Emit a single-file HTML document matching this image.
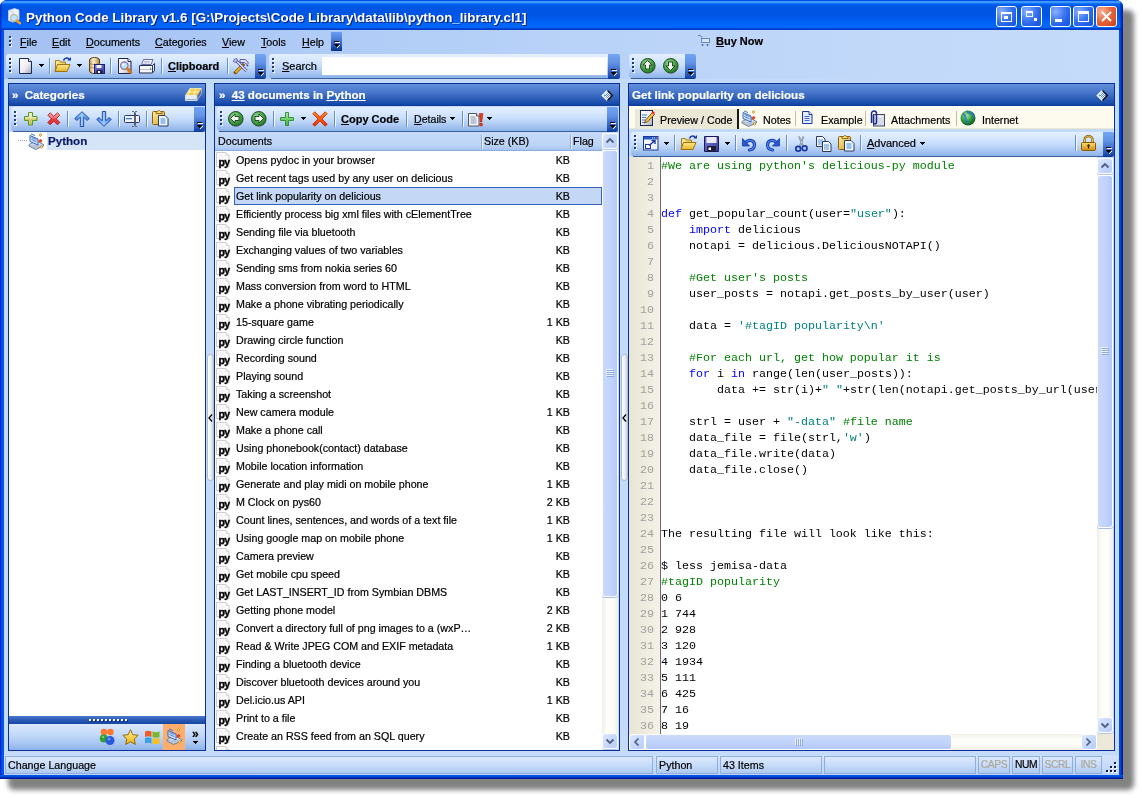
<!DOCTYPE html><html><head><meta charset="utf-8"><title>Python Code Library</title><style>
*{margin:0;padding:0;box-sizing:border-box}
html,body{width:1142px;height:798px;overflow:hidden;background:#fff;font-family:"Liberation Sans",sans-serif;font-size:10.7px;color:#000;-webkit-text-stroke:0.2px}
.a{position:absolute}
svg{position:absolute;overflow:visible}
#shadow{left:8px;top:10px;width:1126px;height:780px;background:rgba(0,0,0,0.49);filter:blur(2.5px);border-radius:6px}
#win{will-change:transform;left:0;top:0;width:1123px;height:779px;background:linear-gradient(90deg,#0019cf 0,#0030d8 1px,#0058ee 2px,#0054e8 4px);border-radius:7px 7px 0 0;overflow:hidden}
#wr{left:1119px;top:30px;width:4px;height:749px;background:linear-gradient(90deg,#0050e8,#0040d0 2px,#0020a8 3px,#00138c 4px)}
#wb{left:0;top:775px;width:1123px;height:4px;background:linear-gradient(180deg,#0058ee,#0044d4 2px,#0024a8 3px,#00138c 4px)}
#title{left:0;top:0;width:1123px;height:30px;background:linear-gradient(180deg,#0050e6 0,#0050e6 1px,#3d98ff 1px,#3d98ff 3px,#1a7aff 3px,#0a6af6 4px,#005ae8 5px,#0054e3 10px,#0056e6 16px,#005ef0 20px,#0064f8 23px,#0066ff 28px,#0044d2 28px,#003ec8 30px)}
#ttext{left:26px;top:10px;color:#fff;font-weight:bold;font-size:13.4px;text-shadow:1px 1px 0 #0a1e7a;white-space:nowrap;-webkit-text-stroke:0}
.tb{top:6px;width:21px;height:21px;border:1px solid #fff;border-radius:3px;background:radial-gradient(circle at 25% 25%,#8ab0ff,#3c77f2 45%,#2160e8 70%,#1a55dc)}
#client{left:4px;top:30px;width:1115px;height:745px;background:#c4daf9}
#strip{left:4px;top:30px;width:1115px;height:49px;background:linear-gradient(90deg,#a4c1f3,#b4cff7 40%,#c2d9f9 80%,#c4dbfa)}
.m{position:absolute;top:36px;white-space:nowrap}
.tbar{border-radius:3px 0 0 3px;background:linear-gradient(180deg,#e3efff 0,#dae9fe 20%,#cadffb 45%,#b0ccf4 72%,#8db3ea 100%)}
.chev{border-radius:0 2px 2px 0;background:linear-gradient(180deg,#73a5f3,#6293e5 35%,#3d6cc8 65%,#1d4cad 90%,#0a3a98)}
.sep{width:2px;border-left:1px solid #6a8ccb;border-right:1px solid #f1f9ff}
.gd{position:absolute;width:2px;height:2px;background:#1f3a78;box-shadow:1px 1px 0 #fff}
.panel{border:1px solid #0a2f9a;background:#c4daf9}
.phead{height:22px;background:linear-gradient(180deg,#6490dc 0,#4a79cc 35%,#2a5cb6 70%,#1448a6 92%,#0a3a98 100%)}
.ht{color:#fff;font-weight:bold;font-size:11.6px;white-space:nowrap;top:88px}
.row{position:absolute;height:18px;white-space:nowrap;line-height:18px;font-size:10.7px}
#status{left:4px;top:751px;width:1115px;height:24px;background:linear-gradient(180deg,#c6dbf9,#c6dbf9 4px,#d2e3fb 5px,#bcd3f6)}
.sp{top:756px;height:18px;border:1px solid #8eaedb;background:linear-gradient(180deg,#dbe9fd,#c8dcf9 50%,#aec9f2);line-height:16px;padding-left:2px;white-space:nowrap;font-size:10.7px}
.code{font-family:"Liberation Mono",monospace;font-size:11.67px;white-space:pre;line-height:16px;-webkit-text-stroke:0}
.ln{color:#a0a0a0;text-align:right;width:25px}
.u{text-decoration:underline;text-underline-offset:1px}
.cm{color:#008000}.kw{color:#0000ff}.st{color:#008080}
.bt{font-weight:bold;font-size:11px;white-space:nowrap}
.nw{white-space:nowrap}
</style></head><body>
<svg width="0" height="0" style="position:absolute"><defs>
<linearGradient id="gDoc" x1="0" y1="0" x2="1" y2="1"><stop offset="0" stop-color="#fff"/><stop offset=".55" stop-color="#eeeef3"/><stop offset="1" stop-color="#9fa3b5"/></linearGradient>
<linearGradient id="gFold" x1="0" y1="0" x2="0" y2="1"><stop offset="0" stop-color="#fbe98a"/><stop offset="1" stop-color="#e6b52a"/></linearGradient>
<linearGradient id="gFoldB" x1="0" y1="0" x2="1" y2="0"><stop offset="0" stop-color="#f8ec90"/><stop offset="1" stop-color="#e8c650"/></linearGradient>
<linearGradient id="gDb" x1="0" y1="0" x2="1" y2="0"><stop offset="0" stop-color="#c89a50"/><stop offset=".4" stop-color="#fbf0d0"/><stop offset="1" stop-color="#b08440"/></linearGradient>
<linearGradient id="gFlop" x1="0" y1="0" x2="1" y2="1"><stop offset="0" stop-color="#7a7ad8"/><stop offset="1" stop-color="#3a3a98"/></linearGradient>
<radialGradient id="gGreen" cx=".4" cy=".35" r=".7"><stop offset="0" stop-color="#9ee09e"/><stop offset=".6" stop-color="#3fa03f"/><stop offset="1" stop-color="#1c6a1c"/></radialGradient>
<linearGradient id="gPlusY" x1="0" y1="0" x2="0" y2="1"><stop offset="0" stop-color="#f4f2e0"/><stop offset=".45" stop-color="#e6e4b0"/><stop offset=".5" stop-color="#d4d070"/><stop offset="1" stop-color="#c8c460"/></linearGradient>
<linearGradient id="gRed" x1="0" y1="0" x2="0" y2="1"><stop offset="0" stop-color="#ffb0b0"/><stop offset=".45" stop-color="#f06868"/><stop offset=".5" stop-color="#e83c3c"/><stop offset="1" stop-color="#e03030"/></linearGradient>
<linearGradient id="gBlue" x1="0" y1="0" x2="1" y2="0"><stop offset="0" stop-color="#3a7ae0"/><stop offset=".45" stop-color="#9ad0ff"/><stop offset="1" stop-color="#3a80e8"/></linearGradient>
<linearGradient id="gOrX" x1="0" y1="0" x2="0" y2="1"><stop offset="0" stop-color="#ff9020"/><stop offset="1" stop-color="#f02800"/></linearGradient>
<linearGradient id="gPlusG" x1="0" y1="0" x2="0" y2="1"><stop offset="0" stop-color="#a8f0a0"/><stop offset="1" stop-color="#40b040"/></linearGradient>
<linearGradient id="gClip" x1="0" y1="0" x2="1" y2="1"><stop offset="0" stop-color="#fff0a0"/><stop offset="1" stop-color="#d89c28"/></linearGradient>
<linearGradient id="gLock" x1="0" y1="0" x2="0" y2="1"><stop offset="0" stop-color="#ffe070"/><stop offset="1" stop-color="#d08a10"/></linearGradient>
<radialGradient id="gGlobe" cx=".4" cy=".35" r=".7"><stop offset="0" stop-color="#a8e8a0"/><stop offset=".5" stop-color="#30a040"/><stop offset="1" stop-color="#105020"/></radialGradient>
<linearGradient id="gStar" x1="0" y1="0" x2="0" y2="1"><stop offset="0" stop-color="#fff4a0"/><stop offset="1" stop-color="#f0b000"/></linearGradient>
</defs></svg>
<div class="a" id="shadow"></div>
<div class="a" id="win">
<div class="a" id="title"></div>
<svg style="left:6px;top:8px" width="16" height="16" viewBox="0 0 16 16"><path d="M2.5 2.5l6-2 4.5 1.5v9.5l-6 2.5-4.5-1.5z" fill="#eef2fc" stroke="#c8d0e8" stroke-width="0.8"/><path d="M2.5 2.5l4.5 1.5v10.5" fill="none" stroke="#b8c4e0" stroke-width="0.8"/><circle cx="8" cy="10" r="3.4" fill="#b8eaff" stroke="#c0b8a8" stroke-width="1.3"/><path d="M10.5 12.5l3.5 2.8" stroke="#ff9a20" stroke-width="2.4" stroke-linecap="round"/></svg>
<div class="a" id="ttext">Python Code Library v1.6 [G:\Projects\Code Library\data\lib\python_library.cl1]</div>
<div class="a tb" style="left:996px"></div>
<div class="a tb" style="left:1021px"></div>
<div class="a tb" style="left:1050px"></div>
<div class="a tb" style="left:1073px"></div>
<div class="a tb" style="left:1096px;background:radial-gradient(circle at 25% 25%,#f5b49a,#e6693f 45%,#d9512a 75%,#c53e18)"></div>
<svg style="left:996px;top:6px" width="21" height="21" viewBox="0 0 21 21"><rect x="5.5" y="6.5" width="10" height="9" fill="none" stroke="#fff" stroke-width="1"/><rect x="5" y="6" width="11" height="2" fill="#fff"/><rect x="8" y="10" width="4" height="3" fill="#fff"/></svg>
<svg style="left:1021px;top:6px" width="21" height="21" viewBox="0 0 21 21"><rect x="5.5" y="5.5" width="6" height="5" fill="none" stroke="#fff"/><rect x="5" y="5" width="7" height="2" fill="#fff"/><rect x="13" y="12" width="3" height="3" fill="#fff"/></svg>
<svg style="left:1050px;top:6px" width="21" height="21" viewBox="0 0 21 21"><rect x="5" y="13" width="7" height="3" fill="#fff"/></svg>
<svg style="left:1073px;top:6px" width="21" height="21" viewBox="0 0 21 21"><rect x="5.5" y="5.5" width="10" height="10" fill="none" stroke="#fff"/><rect x="5" y="5" width="11" height="3" fill="#fff"/></svg>
<svg style="left:1096px;top:6px" width="21" height="21" viewBox="0 0 21 21"><path d="M6 6l9 9M15 6l-9 9" stroke="#fff" stroke-width="2"/></svg>
<div class="a" id="wr"></div><div class="a" id="wb"></div>
<div class="a" style="left:1120px;top:0;width:3px;height:30px;background:linear-gradient(90deg,rgba(0,40,200,.3),rgba(0,30,170,.8) 2px,#001a9a)"></div><div class="a" style="left:0;top:0;width:2px;height:30px;background:linear-gradient(90deg,#0028c0,rgba(0,60,220,.4))"></div>
<div class="a" id="client"></div><div class="a" id="strip"></div>
<div class="gd" style="left:9px;top:36px"></div>
<div class="gd" style="left:9px;top:40px"></div>
<div class="gd" style="left:9px;top:44px"></div>
<div class="m" style="left:20px"><span class="u">F</span>ile</div>
<div class="m" style="left:52px"><span class="u">E</span>dit</div>
<div class="m" style="left:86px"><span class="u">D</span>ocuments</div>
<div class="m" style="left:155px"><span class="u">C</span>ategories</div>
<div class="m" style="left:222px"><span class="u">V</span>iew</div>
<div class="m" style="left:261px"><span class="u">T</span>ools</div>
<div class="m" style="left:302px"><span class="u">H</span>elp</div>
<div class="a chev" style="left:331px;top:32px;height:19px;width:11px;border-radius:0;background:linear-gradient(180deg,#6a9ef0,#4a7cd8 40%,#1c4cac 80%,#0a3088)"></div>
<div class="a" style="left:334px;top:41px;width:5px;height:1px;background:#000"></div>
<div class="a" style="left:335px;top:42px;width:5px;height:1px;background:#fff"></div>
<div class="a" style="left:334px;top:44px;width:5px;height:1px;background:#000"></div>
<div class="a" style="left:335px;top:45px;width:3px;height:1px;background:#000"></div>
<div class="a" style="left:336px;top:46px;width:1px;height:1px;background:#000"></div>
<div class="a" style="left:339px;top:45px;width:1px;height:1px;background:#fff"></div>
<div class="a" style="left:338px;top:46px;width:1px;height:1px;background:#fff"></div>
<div class="a" style="left:337px;top:47px;width:1px;height:1px;background:#fff"></div>
<div class="a tbar" style="left:6px;top:54px;width:249px;height:24px"></div>
<div class="a" style="left:8px;top:78px;width:247px;height:1px;background:#3b619c"></div>
<div class="a chev" style="left:255px;top:54px;height:25px;width:11px;"></div>
<div class="a" style="left:258px;top:69px;width:5px;height:1px;background:#000"></div>
<div class="a" style="left:259px;top:70px;width:5px;height:1px;background:#fff"></div>
<div class="a" style="left:258px;top:72px;width:5px;height:1px;background:#000"></div>
<div class="a" style="left:259px;top:73px;width:3px;height:1px;background:#000"></div>
<div class="a" style="left:260px;top:74px;width:1px;height:1px;background:#000"></div>
<div class="a" style="left:263px;top:73px;width:1px;height:1px;background:#fff"></div>
<div class="a" style="left:262px;top:74px;width:1px;height:1px;background:#fff"></div>
<div class="a" style="left:261px;top:75px;width:1px;height:1px;background:#fff"></div>
<div class="gd" style="left:9px;top:58px"></div>
<div class="gd" style="left:9px;top:62px"></div>
<div class="gd" style="left:9px;top:66px"></div>
<div class="gd" style="left:9px;top:70px"></div>
<svg style="left:19px;top:58px" width="14" height="17" viewBox="0 0 14 17"><path d="M0.5 0.5h9l3 3v12h-12z" fill="url(#gDoc)" stroke="#1c2850"/><path d="M9.5 0.5v3h3" fill="#fff" stroke="#1c2850"/></svg>
<div class="a" style="left:39px;top:64px;width:5px;height:1px;background:#000"></div><div class="a" style="left:40px;top:65px;width:3px;height:1px;background:#000"></div><div class="a" style="left:41px;top:66px;width:1px;height:1px;background:#000"></div>
<div class="a sep" style="left:49px;top:58px;height:16px"></div>
<svg style="left:54px;top:57px" width="18" height="16" viewBox="0 0 18 16"><path d="M1.5 3.5h4l1 1.5h5v9.5h-10z" fill="url(#gFoldB)" stroke="#a08020"/><path d="M3.5 7.5h12.5l-3 7h-12z" fill="url(#gFold)" stroke="#a07010"/><path d="M9.5 3.5c1-3 4.5-3.5 6-0.5" fill="none" stroke="#1838a8" stroke-width="1.6"/><path d="M13.5 3.5h3.5v-3.5z" fill="#1838a8"/></svg>
<div class="a" style="left:77px;top:64px;width:5px;height:1px;background:#000"></div><div class="a" style="left:78px;top:65px;width:3px;height:1px;background:#000"></div><div class="a" style="left:79px;top:66px;width:1px;height:1px;background:#000"></div>
<svg style="left:88px;top:57px" width="17" height="17" viewBox="0 0 17 17"><path d="M1.5 3c0-1.6 2.4-2.5 5-2.5s5 .9 5 2.5v11c0 1.6-2.4 2.5-5 2.5s-5-.9-5-2.5z" fill="url(#gDb)" stroke="#5a4010"/><path d="M1.5 6.5c2 1.3 8 1.3 10 0M1.5 10c2 1.3 8 1.3 10 0" fill="none" stroke="#a07838" stroke-width="0.8"/><rect x="6.5" y="7.5" width="10" height="9" fill="url(#gFlop)" stroke="#202068"/><rect x="8.5" y="8" width="5" height="3" fill="#f4f4fc"/><rect x="8.5" y="13" width="6" height="3.5" fill="#202040"/><rect x="10" y="14" width="2" height="2" fill="#fff"/></svg>
<div class="a sep" style="left:110px;top:58px;height:16px"></div>
<svg style="left:118px;top:58px" width="15" height="17" viewBox="0 0 15 17"><path d="M0.5 0.5h9.5l3 3v12h-12.5z" fill="url(#gDoc)" stroke="#1c2850"/><path d="M10 0.5v3h3" fill="#fff" stroke="#1c2850"/><circle cx="6.3" cy="7.6" r="3.7" fill="#b8e4ff" stroke="#8a70a8" stroke-width="1.2"/><circle cx="5.5" cy="6.8" r="1.3" fill="#f0fbff"/><path d="M9.2 10.5l3.8 4" stroke="#d87818" stroke-width="2.6" stroke-linecap="round"/></svg>
<svg style="left:139px;top:59px" width="16" height="15" viewBox="0 0 16 15"><path d="M4.5 0.5h9.5l-2 5h-9.5z" fill="#f6f6fc" stroke="#6a68a8"/><path d="M5 2.5h6M4.5 4h6" stroke="#9aa0c8" stroke-width="0.7"/><path d="M0.5 6.5h13l2-2v7l-2 2.5h-13z" fill="#dde3ee" stroke="#2c3458"/><path d="M1 7h12.5v6H1z" fill="#f4f6fa"/><path d="M13.5 6.5v7" stroke="#2c3458"/><rect x="11" y="9" width="1" height="2" fill="#2a9a2a"/><path d="M1 10.5h12" stroke="#9aa4b8" stroke-width="0.6"/></svg>
<div class="a sep" style="left:161px;top:58px;height:16px"></div>
<div class="a bt" style="left:168px;top:60px"><span class="u">C</span>lipboard</div>
<div class="a sep" style="left:227px;top:58px;height:16px"></div>
<svg style="left:233px;top:58px" width="17" height="16" viewBox="0 0 17 16"><path d="M2.5 14.5L10 7" stroke="#7a5000" stroke-width="3.2" stroke-linecap="square"/><path d="M2.5 14.5L10 7" stroke="#f0b020" stroke-width="1.8"/><path d="M3 2.5l10.5 10.5" stroke="#5050a0" stroke-width="3"/><path d="M3 2.5l10.5 10.5" stroke="#e8e8f8" stroke-width="1.3"/><path d="M1 1.5l3-1v3.5h-3.5z" fill="#d0d0f0" stroke="#5050a0" stroke-width="0.8"/><path d="M7 1.5h5.5l3 3.5-1.5 1.5-2.5-2h-4.5z" fill="#e0e0f4" stroke="#5050a0" stroke-width="0.9"/><circle cx="14.5" cy="7.5" r="1" fill="#5050a0"/></svg>
<div class="a tbar" style="left:269px;top:54px;width:339px;height:24px"></div>
<div class="a" style="left:271px;top:78px;width:337px;height:1px;background:#3b619c"></div>
<div class="a chev" style="left:608px;top:54px;height:25px;width:12px;"></div>
<div class="a" style="left:611px;top:69px;width:5px;height:1px;background:#000"></div>
<div class="a" style="left:612px;top:70px;width:5px;height:1px;background:#fff"></div>
<div class="a" style="left:611px;top:72px;width:5px;height:1px;background:#000"></div>
<div class="a" style="left:612px;top:73px;width:3px;height:1px;background:#000"></div>
<div class="a" style="left:613px;top:74px;width:1px;height:1px;background:#000"></div>
<div class="a" style="left:616px;top:73px;width:1px;height:1px;background:#fff"></div>
<div class="a" style="left:615px;top:74px;width:1px;height:1px;background:#fff"></div>
<div class="a" style="left:614px;top:75px;width:1px;height:1px;background:#fff"></div>
<div class="gd" style="left:272px;top:58px"></div>
<div class="gd" style="left:272px;top:62px"></div>
<div class="gd" style="left:272px;top:66px"></div>
<div class="gd" style="left:272px;top:70px"></div>
<div class="a nw" style="left:282px;top:60px;font-size:11px"><span class="u">S</span>earch</div>
<div class="a" style="left:322px;top:57px;width:285px;height:18px;background:#fff"></div>
<div class="a tbar" style="left:629px;top:54px;width:56px;height:24px"></div>
<div class="a" style="left:631px;top:78px;width:54px;height:1px;background:#3b619c"></div>
<div class="a chev" style="left:685px;top:54px;height:25px;width:11px;"></div>
<div class="a" style="left:688px;top:69px;width:5px;height:1px;background:#000"></div>
<div class="a" style="left:689px;top:70px;width:5px;height:1px;background:#fff"></div>
<div class="a" style="left:688px;top:72px;width:5px;height:1px;background:#000"></div>
<div class="a" style="left:689px;top:73px;width:3px;height:1px;background:#000"></div>
<div class="a" style="left:690px;top:74px;width:1px;height:1px;background:#000"></div>
<div class="a" style="left:693px;top:73px;width:1px;height:1px;background:#fff"></div>
<div class="a" style="left:692px;top:74px;width:1px;height:1px;background:#fff"></div>
<div class="a" style="left:691px;top:75px;width:1px;height:1px;background:#fff"></div>
<div class="gd" style="left:632px;top:58px"></div>
<div class="gd" style="left:632px;top:62px"></div>
<div class="gd" style="left:632px;top:66px"></div>
<div class="gd" style="left:632px;top:70px"></div>
<svg style="left:640px;top:58px" width="16" height="16" viewBox="0 0 16 16"><circle cx="7.8" cy="7.8" r="7.3" fill="url(#gGreen)" stroke="#2a4a2a" stroke-width="1"/><path d="M7.5 2.5l4.5 4.5h-2.5v4h-4v-4h-2.5z" fill="#f4f4f4" stroke="#1a3a1a" stroke-width="0.9" stroke-linejoin="round"/></svg>
<svg style="left:663px;top:58px" width="16" height="16" viewBox="0 0 16 16"><circle cx="7.8" cy="7.8" r="7.3" fill="url(#gGreen)" stroke="#2a4a2a" stroke-width="1"/><path d="M7.5 12.5l4.5-4.5h-2.5v-4h-4v4h-2.5z" fill="#f4f4f4" stroke="#1a3a1a" stroke-width="0.9" stroke-linejoin="round"/></svg>
<svg style="left:698px;top:35px" width="14" height="12" viewBox="0 0 14 12"><path d="M0 0.5h2.5l2 3" fill="none" stroke="#5a7aa8" stroke-width="0.9"/><rect x="3.5" y="3.5" width="8" height="4" fill="#d8e4f0" stroke="#6a8cb8"/><path d="M4.5 9v2M3.5 10h2M9.5 9v2M8.5 10h2" stroke="#4a6a98" stroke-width="0.9"/></svg>
<div class="a bt" style="left:716px;top:35px"><span class="u">B</span>uy Now</div>
<div class="a panel" style="left:8px;top:83px;width:198px;height:668px"></div>
<div class="a phead" style="left:9px;top:84px;width:196px;height:22px"></div>
<div class="a ht" style="left:12px"><span style="margin-right:3px">»</span> Categories</div>
<svg style="left:185px;top:87px" width="17" height="16" viewBox="0 0 17 16"><path d="M0.5 8.5l4.5-7h11.5l-4.5 7z" fill="#f4cc48" stroke="#f8f0c8" stroke-width="0.8"/><path d="M3 5h11M5.3 1.5l-2.3 7M11 1.5l-2.3 7" stroke="#fff4c0" stroke-width="0.9"/><path d="M0.5 8.5h11.5v5h-11.5z" fill="#e4ecf8" stroke="#e8eef8" stroke-width="0.8"/><path d="M1 12.5h11" stroke="#9ab0d0"/><path d="M12 8.5l4.5-7v5l-4.5 7z" fill="#5a6a88" stroke="#c0c8d8" stroke-width="0.7"/></svg>
<div class="a tbar" style="left:11px;top:107px;width:183px;height:24px"></div>
<div class="a" style="left:13px;top:131px;width:181px;height:1px;background:#3b619c"></div>
<div class="a chev" style="left:194px;top:107px;height:25px;width:11px;"></div>
<div class="a" style="left:197px;top:122px;width:5px;height:1px;background:#000"></div>
<div class="a" style="left:198px;top:123px;width:5px;height:1px;background:#fff"></div>
<div class="a" style="left:197px;top:125px;width:5px;height:1px;background:#000"></div>
<div class="a" style="left:198px;top:126px;width:3px;height:1px;background:#000"></div>
<div class="a" style="left:199px;top:127px;width:1px;height:1px;background:#000"></div>
<div class="a" style="left:202px;top:126px;width:1px;height:1px;background:#fff"></div>
<div class="a" style="left:201px;top:127px;width:1px;height:1px;background:#fff"></div>
<div class="a" style="left:200px;top:128px;width:1px;height:1px;background:#fff"></div>
<div class="gd" style="left:14px;top:111px"></div>
<div class="gd" style="left:14px;top:115px"></div>
<div class="gd" style="left:14px;top:119px"></div>
<div class="gd" style="left:14px;top:123px"></div>
<svg style="left:24px;top:112px" width="14" height="14" viewBox="0 0 14 14"><path d="M4.5 0.5h4v4h4.5v4h-4.5v4.5h-4v-4.5h-4v-4h4z" fill="url(#gPlusY)" stroke="#5a9820" stroke-width="1"/></svg>
<svg style="left:47px;top:112px" width="14" height="14" viewBox="0 0 14 14"><path d="M0.8 3.2l2.4-2.4 3.6 3.6 3.6-3.6 2.4 2.4-3.6 3.6 3.6 3.6-2.4 2.4-3.6-3.6-3.6 3.6-2.4-2.4 3.6-3.6z" fill="url(#gRed)" stroke="#b01818" stroke-width="0.9"/></svg>
<div class="a sep" style="left:67px;top:111px;height:16px"></div>
<svg style="left:74px;top:111px" width="16" height="16" viewBox="0 0 16 16"><path d="M8 0.7l7.2 6.8-2 2-3.5-3.3v9.3h-3.4v-9.3l-3.5 3.3-2-2z" fill="url(#gBlue)" stroke="#1c3c98" stroke-width="0.9" stroke-linejoin="round"/></svg>
<svg style="left:96px;top:111px" width="16" height="16" viewBox="0 0 16 16"><path d="M8 15.3l7.2-6.8-2-2-3.5 3.3v-9.3h-3.4v9.3l-3.5-3.3-2 2z" fill="url(#gBlue)" stroke="#1c3c98" stroke-width="0.9" stroke-linejoin="round"/></svg>
<div class="a sep" style="left:118px;top:111px;height:16px"></div>
<svg style="left:124px;top:111px" width="17" height="17" viewBox="0 0 17 17"><rect x="0.5" y="4.5" width="15" height="7" rx="1" fill="#f0f4fa" stroke="#263a6a"/><rect x="2" y="7" width="6" height="1.3" fill="#3a7ad0"/><path d="M8 0.5h1.5l1 1 1-1h1.5M8 15.5h1.5l1-1 1 1h1.5M10.5 1.5v13M11.5 1.5v13" stroke="#505060" stroke-width="0.9" fill="none"/></svg>
<div class="a sep" style="left:146px;top:111px;height:16px"></div>
<svg style="left:152px;top:110px" width="17" height="17" viewBox="0 0 17 17"><rect x="0.5" y="1.5" width="12" height="13" rx="1" fill="url(#gClip)" stroke="#8a6010"/><path d="M4 3.5v-2h1.5l1-1h1l1 1h1.5v2z" fill="#f6d870" stroke="#8a6010" stroke-width="0.9"/><path d="M6.5 5.5h6.5l3 3v7.5h-9.5z" fill="#f4f8ff" stroke="#2a3a6a"/><path d="M8.5 9h5M8.5 11h5M8.5 13h5" stroke="#3a88d8" stroke-width="1"/></svg>
<div class="a" style="left:9px;top:132px;width:196px;height:584px;background:#fff"></div>
<div class="a" style="left:47px;top:132px;width:158px;height:18px;background:#d6e4f8"></div>
<div class="a" style="left:18px;top:140px;width:10px;height:1px;background:repeating-linear-gradient(90deg,#a0a0a0 0 1px,transparent 1px 2px)"></div>
<svg style="left:28px;top:133px" width="17" height="17" viewBox="0 0 17 17"><path d="M1 11.5l6.5 3.5 8-3.5-7-3.5z" fill="#e8eef6" stroke="#6a7a90" stroke-width="0.9"/><path d="M1 11.5v1.5l6.5 3.5 8-3.5v-1.5" fill="#b8c4d8" stroke="#6a7a90" stroke-width="0.9"/><path d="M2 2.5l8 3.5v6l-8-3.5z" fill="#cfe2fa" stroke="#2a5ab8" stroke-width="0.9"/><path d="M3.5 4.5l5 2.2M3.5 6.5l5 2.2" stroke="#3a78d8" stroke-width="0.9"/><path d="M3 1l4 1.5" stroke="#3a78d8"/><path d="M12.5 0.5l1.5 1.5-1.5 1.5-1.5-1.5z" fill="#f8d070" stroke="#c08010" stroke-width="0.6"/><path d="M13.5 12.5l1.5 1.5-1.5 1.5-1.5-1.5z" fill="#f8d070" stroke="#c08010" stroke-width="0.6"/><path d="M10 7.5l3-1.5 1.5 2-2 2z" fill="#e84020"/></svg>
<div class="a" style="left:48px;top:134px;font-weight:bold;font-size:11.6px;color:#0a1a6a;white-space:nowrap">Python</div>
<div class="a" style="left:9px;top:716px;width:196px;height:8px;background:linear-gradient(180deg,#4a78cc,#2a5ab4 50%,#1446a0)"></div>
<div class="a" style="left:89px;top:719px;width:2px;height:2px;background:#fff;box-shadow:1px 1px 0 #0a2a7a"></div>
<div class="a" style="left:93px;top:719px;width:2px;height:2px;background:#fff;box-shadow:1px 1px 0 #0a2a7a"></div>
<div class="a" style="left:97px;top:719px;width:2px;height:2px;background:#fff;box-shadow:1px 1px 0 #0a2a7a"></div>
<div class="a" style="left:101px;top:719px;width:2px;height:2px;background:#fff;box-shadow:1px 1px 0 #0a2a7a"></div>
<div class="a" style="left:105px;top:719px;width:2px;height:2px;background:#fff;box-shadow:1px 1px 0 #0a2a7a"></div>
<div class="a" style="left:109px;top:719px;width:2px;height:2px;background:#fff;box-shadow:1px 1px 0 #0a2a7a"></div>
<div class="a" style="left:113px;top:719px;width:2px;height:2px;background:#fff;box-shadow:1px 1px 0 #0a2a7a"></div>
<div class="a" style="left:117px;top:719px;width:2px;height:2px;background:#fff;box-shadow:1px 1px 0 #0a2a7a"></div>
<div class="a" style="left:121px;top:719px;width:2px;height:2px;background:#fff;box-shadow:1px 1px 0 #0a2a7a"></div>
<div class="a" style="left:125px;top:719px;width:2px;height:2px;background:#fff;box-shadow:1px 1px 0 #0a2a7a"></div>
<div class="a" style="left:9px;top:724px;width:196px;height:26px;background:linear-gradient(180deg,#dae8fd,#c4daf9 40%,#a8c6f1 75%,#8cb2e9)"></div>
<div class="a" style="left:163px;top:724px;width:22px;height:26px;background:#fdae6c"></div>
<svg style="left:99px;top:728px" width="18" height="18" viewBox="0 0 18 18"><circle cx="5" cy="4" r="3.3" fill="#ff7a30"/><circle cx="11.5" cy="4" r="3.3" fill="#ff7a30"/><circle cx="4.8" cy="10.5" r="4" fill="#30a030"/><circle cx="11" cy="12.5" r="4.5" fill="#2858e0"/><circle cx="10" cy="11" r="1.5" fill="#8ab0ff" opacity=".7"/><circle cx="4" cy="9" r="1.2" fill="#a0e0a0" opacity=".7"/></svg>
<svg style="left:122px;top:729px" width="17" height="16" viewBox="0 0 17 16"><path d="M8.5 0.7l2.3 5 5.4 0.6-4 3.7 1.1 5.4-4.8-2.7-4.8 2.7 1.1-5.4-4-3.7 5.4-0.6z" fill="url(#gStar)" stroke="#8a6000" stroke-width="0.9" stroke-linejoin="round"/></svg>
<svg style="left:144px;top:728px" width="17" height="17" viewBox="0 0 17 17"><path d="M1 3.5c2-1 4-1 6.5 0v5.5c-2.5-1-4.5-1-6.5 0z" fill="#f05a28"/><path d="M8.5 3.5c2.5 1 4.5 1 7 0v5.5c-2.5 1-4.5 1-7 0z" fill="#7ab828"/><path d="M1 10c2-1 4-1 6.5 0v5.5c-2.5-1-4.5-1-6.5 0z" fill="#3aa0e8"/><path d="M8.5 10c2.5 1 4.5 1 7 0v5.5c-2.5 1-4.5 1-7 0z" fill="#f8c020"/></svg>
<svg style="left:166px;top:728px" width="17" height="17" viewBox="0 0 17 17"><path d="M1 11.5l6.5 3.5 8-3.5-7-3.5z" fill="#e8eef6" stroke="#6a7a90" stroke-width="0.9"/><path d="M1 11.5v1.5l6.5 3.5 8-3.5v-1.5" fill="#b8c4d8" stroke="#6a7a90" stroke-width="0.9"/><path d="M2 2.5l8 3.5v6l-8-3.5z" fill="#cfe2fa" stroke="#2a5ab8" stroke-width="0.9"/><path d="M3.5 4.5l5 2.2M3.5 6.5l5 2.2" stroke="#3a78d8" stroke-width="0.9"/><path d="M3 1l4 1.5" stroke="#3a78d8"/><path d="M12.5 0.5l1.5 1.5-1.5 1.5-1.5-1.5z" fill="#f8d070" stroke="#c08010" stroke-width="0.6"/><path d="M13.5 12.5l1.5 1.5-1.5 1.5-1.5-1.5z" fill="#f8d070" stroke="#c08010" stroke-width="0.6"/><path d="M10 7.5l3-1.5 1.5 2-2 2z" fill="#e84020"/></svg>
<div class="a" style="left:192px;top:728px;font-size:12px;font-weight:bold;line-height:12px">»</div>
<div class="a" style="left:193px;top:741px;width:5px;height:1px;background:#000"></div><div class="a" style="left:194px;top:742px;width:3px;height:1px;background:#000"></div><div class="a" style="left:195px;top:743px;width:1px;height:1px;background:#000"></div>
<div class="a" style="left:207px;top:354px;width:7px;height:127px;border:1px solid #b0bccc;border-radius:4px;background:linear-gradient(90deg,#fdfdfd,#eef2f6 50%,#c8d4e0)"></div>
<svg style="left:208px;top:414px" width="5" height="8" viewBox="0 0 5 8"><path d="M4 0.5L1 4l3 3.5" fill="none" stroke="#000" stroke-width="1.3"/></svg>
<div class="a" style="left:621px;top:354px;width:7px;height:127px;border:1px solid #b0bccc;border-radius:4px;background:linear-gradient(90deg,#fdfdfd,#eef2f6 50%,#c8d4e0)"></div>
<svg style="left:622px;top:414px" width="5" height="8" viewBox="0 0 5 8"><path d="M4 0.5L1 4l3 3.5" fill="none" stroke="#000" stroke-width="1.3"/></svg>
<div class="a panel" style="left:214px;top:83px;width:406px;height:668px"></div>
<div class="a phead" style="left:215px;top:84px;width:404px;height:22px"></div>
<div class="a ht" style="left:219px"><span style="margin-right:3px">»</span> <span class="u">43</span> documents in <span class="u">Python</span></div>
<svg style="left:602px;top:90px" width="11" height="11" viewBox="0 0 11 11"><path d="M5.5 0.5L10.5 5.5 5.5 10.5 0.5 5.5z" fill="#4a86f0"/><path d="M5.5 2.5h1v1h-1zM4.5 3.5h1v1h-1zM6.5 3.5h1v1h-1zM3.5 4.5h1v1h-1zM5.5 4.5h1v1h-1zM7.5 4.5h1v1h-1zM4.5 5.5h1v1h-1zM6.5 5.5h1v1h-1zM5.5 6.5h1v1h-1zM3.5 6.5h1v1h-1zM7.5 6.5h1v1h-1zM4.5 7.5h1v1h-1zM6.5 7.5h1v1h-1zM5.5 8.5h1v1h-1z" transform="translate(-0.5,-0.5)" fill="#fff"/><path d="M5.5 0.5L0.5 5.5 5.5 10.5" fill="none" stroke="#fff" stroke-width="1.6"/><path d="M5.5 0.5L10.5 5.5 5.5 10.5" fill="none" stroke="#000" stroke-width="1.1"/></svg>
<div class="a tbar" style="left:217px;top:107px;width:390px;height:24px"></div>
<div class="a" style="left:219px;top:131px;width:388px;height:1px;background:#3b619c"></div>
<div class="a chev" style="left:607px;top:107px;height:25px;width:11px;"></div>
<div class="a" style="left:610px;top:122px;width:5px;height:1px;background:#000"></div>
<div class="a" style="left:611px;top:123px;width:5px;height:1px;background:#fff"></div>
<div class="a" style="left:610px;top:125px;width:5px;height:1px;background:#000"></div>
<div class="a" style="left:611px;top:126px;width:3px;height:1px;background:#000"></div>
<div class="a" style="left:612px;top:127px;width:1px;height:1px;background:#000"></div>
<div class="a" style="left:615px;top:126px;width:1px;height:1px;background:#fff"></div>
<div class="a" style="left:614px;top:127px;width:1px;height:1px;background:#fff"></div>
<div class="a" style="left:613px;top:128px;width:1px;height:1px;background:#fff"></div>
<div class="gd" style="left:220px;top:111px"></div>
<div class="gd" style="left:220px;top:115px"></div>
<div class="gd" style="left:220px;top:119px"></div>
<div class="gd" style="left:220px;top:123px"></div>
<svg style="left:228px;top:111px" width="16" height="16" viewBox="0 0 16 16"><circle cx="7.8" cy="7.8" r="7.3" fill="url(#gGreen)" stroke="#2a4a2a" stroke-width="1"/><path d="M2.5 7.5l4.5-4.5v2.5h4v4h-4v2.5z" fill="#f4f4f4" stroke="#1a3a1a" stroke-width="0.9" stroke-linejoin="round"/></svg>
<svg style="left:251px;top:111px" width="16" height="16" viewBox="0 0 16 16"><circle cx="7.8" cy="7.8" r="7.3" fill="url(#gGreen)" stroke="#2a4a2a" stroke-width="1"/><path d="M12.5 7.5l-4.5-4.5v2.5h-4v4h4v2.5z" fill="#f4f4f4" stroke="#1a3a1a" stroke-width="0.9" stroke-linejoin="round"/></svg>
<div class="a sep" style="left:273px;top:111px;height:16px"></div>
<svg style="left:280px;top:112px" width="15" height="15" viewBox="0 0 15 15"><path d="M5.5 0.5h3v5h5v3h-5v5h-3v-5h-5v-3h5z" fill="url(#gPlusG)" stroke="#2a8a2a" stroke-width="0.9"/></svg>
<div class="a" style="left:301px;top:117px;width:5px;height:1px;background:#000"></div><div class="a" style="left:302px;top:118px;width:3px;height:1px;background:#000"></div><div class="a" style="left:303px;top:119px;width:1px;height:1px;background:#000"></div>
<svg style="left:312px;top:111px" width="16" height="16" viewBox="0 0 16 16"><path d="M0.8 2.8l2-2 5.2 5.2 5.2-5.2 2 2-5.2 5.2 5.2 5.2-2 2-5.2-5.2-5.2 5.2-2-2 5.2-5.2z" fill="url(#gOrX)" stroke="#c02000" stroke-width="0.8"/></svg>
<div class="a sep" style="left:334px;top:111px;height:16px"></div>
<div class="a bt" style="left:341px;top:113px"><span class="u">C</span>opy Code</div>
<div class="a sep" style="left:406px;top:111px;height:16px"></div>
<div class="a nw" style="left:414px;top:113px;font-size:10.6px"><span class="u">D</span>etails</div>
<div class="a" style="left:450px;top:117px;width:5px;height:1px;background:#000"></div><div class="a" style="left:451px;top:118px;width:3px;height:1px;background:#000"></div><div class="a" style="left:452px;top:119px;width:1px;height:1px;background:#000"></div>
<div class="a sep" style="left:462px;top:111px;height:16px"></div>
<svg style="left:468px;top:112px" width="17" height="16" viewBox="0 0 17 16"><path d="M0.5 1.5h8l2.5 2.5v10h-10.5z" fill="#f4f6fa" stroke="#505868"/><path d="M8.5 1.5v2.5h2.5" fill="#fff" stroke="#505868"/><path d="M2.5 5h5M2.5 7h6M2.5 9h6M2.5 11h6" stroke="#8a92a8"/><path d="M11.3 1.5h3.6l-1.1 8.5h-1.4z" fill="#f03818" stroke="#a01800" stroke-width="0.5"/><circle cx="13.1" cy="12.6" r="1.5" fill="#f03818" stroke="#a01800" stroke-width="0.5"/></svg>
<div class="a" style="left:487px;top:117px;width:5px;height:1px;background:#000"></div><div class="a" style="left:488px;top:118px;width:3px;height:1px;background:#000"></div><div class="a" style="left:489px;top:119px;width:1px;height:1px;background:#000"></div>
<div class="a" style="left:215px;top:133px;width:387px;height:617px;background:#fff"></div>
<div class="a" style="left:215px;top:133px;width:387px;height:18px;background:linear-gradient(180deg,#c4d9f8,#bed5f7 70%,#a6c3ef);border-bottom:1px solid #8aaee0"></div>
<div class="a" style="left:481px;top:135px;width:1px;height:14px;background:#8aaada"></div><div class="a" style="left:482px;top:135px;width:1px;height:14px;background:#eef4fe"></div>
<div class="a" style="left:570px;top:135px;width:1px;height:14px;background:#8aaada"></div><div class="a" style="left:571px;top:135px;width:1px;height:14px;background:#eef4fe"></div>
<div class="a nw" style="left:218px;top:135px">Documents</div>
<div class="a nw" style="left:484px;top:135px">Size (KB)</div>
<div class="a nw" style="left:573px;top:135px">Flag</div>
<div class="a" style="left:215px;top:151px;width:387px;height:599px;overflow:hidden">
<svg style="left:0px;top:0px" width="16" height="17" viewBox="0 0 16 17"><path d="M1.5 1.5h9.5l3 3v11h-12.5z" fill="#fdfdfd" stroke="#cdcdcd"/><path d="M11 1.5v3h3" fill="none" stroke="#dadada"/><path d="M3 4h6M3 6h7" stroke="#eeeeee"/><text x="3.4" y="14.8" font-family="Liberation Sans" font-weight="bold" font-size="10.6" fill="#000" stroke="#000" stroke-width="0.35" letter-spacing="-0.5">py</text></svg>
<div class="row" style="left:21px;top:0px">Opens pydoc in your browser</div>
<div class="row" style="left:300px;width:55px;text-align:right;top:0px">KB</div>
<svg style="left:0px;top:18px" width="16" height="17" viewBox="0 0 16 17"><path d="M1.5 1.5h9.5l3 3v11h-12.5z" fill="#fdfdfd" stroke="#cdcdcd"/><path d="M11 1.5v3h3" fill="none" stroke="#dadada"/><path d="M3 4h6M3 6h7" stroke="#eeeeee"/><text x="3.4" y="14.8" font-family="Liberation Sans" font-weight="bold" font-size="10.6" fill="#000" stroke="#000" stroke-width="0.35" letter-spacing="-0.5">py</text></svg>
<div class="row" style="left:21px;top:18px">Get recent tags used by any user on delicious</div>
<div class="row" style="left:300px;width:55px;text-align:right;top:18px">KB</div>
<div class="a" style="left:19px;top:36px;width:368px;height:18px;background:#c4d8f6;border:1px solid #3264be"></div>
<svg style="left:0px;top:36px" width="16" height="17" viewBox="0 0 16 17"><path d="M1.5 1.5h9.5l3 3v11h-12.5z" fill="#fdfdfd" stroke="#cdcdcd"/><path d="M11 1.5v3h3" fill="none" stroke="#dadada"/><path d="M3 4h6M3 6h7" stroke="#eeeeee"/><text x="3.4" y="14.8" font-family="Liberation Sans" font-weight="bold" font-size="10.6" fill="#000" stroke="#000" stroke-width="0.35" letter-spacing="-0.5">py</text></svg>
<div class="row" style="left:21px;top:36px">Get link popularity on delicious</div>
<div class="row" style="left:300px;width:55px;text-align:right;top:36px">KB</div>
<svg style="left:0px;top:54px" width="16" height="17" viewBox="0 0 16 17"><path d="M1.5 1.5h9.5l3 3v11h-12.5z" fill="#fdfdfd" stroke="#cdcdcd"/><path d="M11 1.5v3h3" fill="none" stroke="#dadada"/><path d="M3 4h6M3 6h7" stroke="#eeeeee"/><text x="3.4" y="14.8" font-family="Liberation Sans" font-weight="bold" font-size="10.6" fill="#000" stroke="#000" stroke-width="0.35" letter-spacing="-0.5">py</text></svg>
<div class="row" style="left:21px;top:54px">Efficiently process big xml files with cElementTree</div>
<div class="row" style="left:300px;width:55px;text-align:right;top:54px">KB</div>
<svg style="left:0px;top:72px" width="16" height="17" viewBox="0 0 16 17"><path d="M1.5 1.5h9.5l3 3v11h-12.5z" fill="#fdfdfd" stroke="#cdcdcd"/><path d="M11 1.5v3h3" fill="none" stroke="#dadada"/><path d="M3 4h6M3 6h7" stroke="#eeeeee"/><text x="3.4" y="14.8" font-family="Liberation Sans" font-weight="bold" font-size="10.6" fill="#000" stroke="#000" stroke-width="0.35" letter-spacing="-0.5">py</text></svg>
<div class="row" style="left:21px;top:72px">Sending file via bluetooth</div>
<div class="row" style="left:300px;width:55px;text-align:right;top:72px">KB</div>
<svg style="left:0px;top:90px" width="16" height="17" viewBox="0 0 16 17"><path d="M1.5 1.5h9.5l3 3v11h-12.5z" fill="#fdfdfd" stroke="#cdcdcd"/><path d="M11 1.5v3h3" fill="none" stroke="#dadada"/><path d="M3 4h6M3 6h7" stroke="#eeeeee"/><text x="3.4" y="14.8" font-family="Liberation Sans" font-weight="bold" font-size="10.6" fill="#000" stroke="#000" stroke-width="0.35" letter-spacing="-0.5">py</text></svg>
<div class="row" style="left:21px;top:90px">Exchanging values of two variables</div>
<div class="row" style="left:300px;width:55px;text-align:right;top:90px">KB</div>
<svg style="left:0px;top:108px" width="16" height="17" viewBox="0 0 16 17"><path d="M1.5 1.5h9.5l3 3v11h-12.5z" fill="#fdfdfd" stroke="#cdcdcd"/><path d="M11 1.5v3h3" fill="none" stroke="#dadada"/><path d="M3 4h6M3 6h7" stroke="#eeeeee"/><text x="3.4" y="14.8" font-family="Liberation Sans" font-weight="bold" font-size="10.6" fill="#000" stroke="#000" stroke-width="0.35" letter-spacing="-0.5">py</text></svg>
<div class="row" style="left:21px;top:108px">Sending sms from nokia series 60</div>
<div class="row" style="left:300px;width:55px;text-align:right;top:108px">KB</div>
<svg style="left:0px;top:126px" width="16" height="17" viewBox="0 0 16 17"><path d="M1.5 1.5h9.5l3 3v11h-12.5z" fill="#fdfdfd" stroke="#cdcdcd"/><path d="M11 1.5v3h3" fill="none" stroke="#dadada"/><path d="M3 4h6M3 6h7" stroke="#eeeeee"/><text x="3.4" y="14.8" font-family="Liberation Sans" font-weight="bold" font-size="10.6" fill="#000" stroke="#000" stroke-width="0.35" letter-spacing="-0.5">py</text></svg>
<div class="row" style="left:21px;top:126px">Mass conversion from word to HTML</div>
<div class="row" style="left:300px;width:55px;text-align:right;top:126px">KB</div>
<svg style="left:0px;top:144px" width="16" height="17" viewBox="0 0 16 17"><path d="M1.5 1.5h9.5l3 3v11h-12.5z" fill="#fdfdfd" stroke="#cdcdcd"/><path d="M11 1.5v3h3" fill="none" stroke="#dadada"/><path d="M3 4h6M3 6h7" stroke="#eeeeee"/><text x="3.4" y="14.8" font-family="Liberation Sans" font-weight="bold" font-size="10.6" fill="#000" stroke="#000" stroke-width="0.35" letter-spacing="-0.5">py</text></svg>
<div class="row" style="left:21px;top:144px">Make a phone vibrating periodically</div>
<div class="row" style="left:300px;width:55px;text-align:right;top:144px">KB</div>
<svg style="left:0px;top:162px" width="16" height="17" viewBox="0 0 16 17"><path d="M1.5 1.5h9.5l3 3v11h-12.5z" fill="#fdfdfd" stroke="#cdcdcd"/><path d="M11 1.5v3h3" fill="none" stroke="#dadada"/><path d="M3 4h6M3 6h7" stroke="#eeeeee"/><text x="3.4" y="14.8" font-family="Liberation Sans" font-weight="bold" font-size="10.6" fill="#000" stroke="#000" stroke-width="0.35" letter-spacing="-0.5">py</text></svg>
<div class="row" style="left:21px;top:162px">15-square game</div>
<div class="row" style="left:300px;width:55px;text-align:right;top:162px">1 KB</div>
<svg style="left:0px;top:180px" width="16" height="17" viewBox="0 0 16 17"><path d="M1.5 1.5h9.5l3 3v11h-12.5z" fill="#fdfdfd" stroke="#cdcdcd"/><path d="M11 1.5v3h3" fill="none" stroke="#dadada"/><path d="M3 4h6M3 6h7" stroke="#eeeeee"/><text x="3.4" y="14.8" font-family="Liberation Sans" font-weight="bold" font-size="10.6" fill="#000" stroke="#000" stroke-width="0.35" letter-spacing="-0.5">py</text></svg>
<div class="row" style="left:21px;top:180px">Drawing circle function</div>
<div class="row" style="left:300px;width:55px;text-align:right;top:180px">KB</div>
<svg style="left:0px;top:198px" width="16" height="17" viewBox="0 0 16 17"><path d="M1.5 1.5h9.5l3 3v11h-12.5z" fill="#fdfdfd" stroke="#cdcdcd"/><path d="M11 1.5v3h3" fill="none" stroke="#dadada"/><path d="M3 4h6M3 6h7" stroke="#eeeeee"/><text x="3.4" y="14.8" font-family="Liberation Sans" font-weight="bold" font-size="10.6" fill="#000" stroke="#000" stroke-width="0.35" letter-spacing="-0.5">py</text></svg>
<div class="row" style="left:21px;top:198px">Recording sound</div>
<div class="row" style="left:300px;width:55px;text-align:right;top:198px">KB</div>
<svg style="left:0px;top:216px" width="16" height="17" viewBox="0 0 16 17"><path d="M1.5 1.5h9.5l3 3v11h-12.5z" fill="#fdfdfd" stroke="#cdcdcd"/><path d="M11 1.5v3h3" fill="none" stroke="#dadada"/><path d="M3 4h6M3 6h7" stroke="#eeeeee"/><text x="3.4" y="14.8" font-family="Liberation Sans" font-weight="bold" font-size="10.6" fill="#000" stroke="#000" stroke-width="0.35" letter-spacing="-0.5">py</text></svg>
<div class="row" style="left:21px;top:216px">Playing sound</div>
<div class="row" style="left:300px;width:55px;text-align:right;top:216px">KB</div>
<svg style="left:0px;top:234px" width="16" height="17" viewBox="0 0 16 17"><path d="M1.5 1.5h9.5l3 3v11h-12.5z" fill="#fdfdfd" stroke="#cdcdcd"/><path d="M11 1.5v3h3" fill="none" stroke="#dadada"/><path d="M3 4h6M3 6h7" stroke="#eeeeee"/><text x="3.4" y="14.8" font-family="Liberation Sans" font-weight="bold" font-size="10.6" fill="#000" stroke="#000" stroke-width="0.35" letter-spacing="-0.5">py</text></svg>
<div class="row" style="left:21px;top:234px">Taking a screenshot</div>
<div class="row" style="left:300px;width:55px;text-align:right;top:234px">KB</div>
<svg style="left:0px;top:252px" width="16" height="17" viewBox="0 0 16 17"><path d="M1.5 1.5h9.5l3 3v11h-12.5z" fill="#fdfdfd" stroke="#cdcdcd"/><path d="M11 1.5v3h3" fill="none" stroke="#dadada"/><path d="M3 4h6M3 6h7" stroke="#eeeeee"/><text x="3.4" y="14.8" font-family="Liberation Sans" font-weight="bold" font-size="10.6" fill="#000" stroke="#000" stroke-width="0.35" letter-spacing="-0.5">py</text></svg>
<div class="row" style="left:21px;top:252px">New camera module</div>
<div class="row" style="left:300px;width:55px;text-align:right;top:252px">1 KB</div>
<svg style="left:0px;top:270px" width="16" height="17" viewBox="0 0 16 17"><path d="M1.5 1.5h9.5l3 3v11h-12.5z" fill="#fdfdfd" stroke="#cdcdcd"/><path d="M11 1.5v3h3" fill="none" stroke="#dadada"/><path d="M3 4h6M3 6h7" stroke="#eeeeee"/><text x="3.4" y="14.8" font-family="Liberation Sans" font-weight="bold" font-size="10.6" fill="#000" stroke="#000" stroke-width="0.35" letter-spacing="-0.5">py</text></svg>
<div class="row" style="left:21px;top:270px">Make a phone call</div>
<div class="row" style="left:300px;width:55px;text-align:right;top:270px">KB</div>
<svg style="left:0px;top:288px" width="16" height="17" viewBox="0 0 16 17"><path d="M1.5 1.5h9.5l3 3v11h-12.5z" fill="#fdfdfd" stroke="#cdcdcd"/><path d="M11 1.5v3h3" fill="none" stroke="#dadada"/><path d="M3 4h6M3 6h7" stroke="#eeeeee"/><text x="3.4" y="14.8" font-family="Liberation Sans" font-weight="bold" font-size="10.6" fill="#000" stroke="#000" stroke-width="0.35" letter-spacing="-0.5">py</text></svg>
<div class="row" style="left:21px;top:288px">Using phonebook(contact) database</div>
<div class="row" style="left:300px;width:55px;text-align:right;top:288px">KB</div>
<svg style="left:0px;top:306px" width="16" height="17" viewBox="0 0 16 17"><path d="M1.5 1.5h9.5l3 3v11h-12.5z" fill="#fdfdfd" stroke="#cdcdcd"/><path d="M11 1.5v3h3" fill="none" stroke="#dadada"/><path d="M3 4h6M3 6h7" stroke="#eeeeee"/><text x="3.4" y="14.8" font-family="Liberation Sans" font-weight="bold" font-size="10.6" fill="#000" stroke="#000" stroke-width="0.35" letter-spacing="-0.5">py</text></svg>
<div class="row" style="left:21px;top:306px">Mobile location information</div>
<div class="row" style="left:300px;width:55px;text-align:right;top:306px">KB</div>
<svg style="left:0px;top:324px" width="16" height="17" viewBox="0 0 16 17"><path d="M1.5 1.5h9.5l3 3v11h-12.5z" fill="#fdfdfd" stroke="#cdcdcd"/><path d="M11 1.5v3h3" fill="none" stroke="#dadada"/><path d="M3 4h6M3 6h7" stroke="#eeeeee"/><text x="3.4" y="14.8" font-family="Liberation Sans" font-weight="bold" font-size="10.6" fill="#000" stroke="#000" stroke-width="0.35" letter-spacing="-0.5">py</text></svg>
<div class="row" style="left:21px;top:324px">Generate and play midi on mobile phone</div>
<div class="row" style="left:300px;width:55px;text-align:right;top:324px">1 KB</div>
<svg style="left:0px;top:342px" width="16" height="17" viewBox="0 0 16 17"><path d="M1.5 1.5h9.5l3 3v11h-12.5z" fill="#fdfdfd" stroke="#cdcdcd"/><path d="M11 1.5v3h3" fill="none" stroke="#dadada"/><path d="M3 4h6M3 6h7" stroke="#eeeeee"/><text x="3.4" y="14.8" font-family="Liberation Sans" font-weight="bold" font-size="10.6" fill="#000" stroke="#000" stroke-width="0.35" letter-spacing="-0.5">py</text></svg>
<div class="row" style="left:21px;top:342px">M Clock on pys60</div>
<div class="row" style="left:300px;width:55px;text-align:right;top:342px">2 KB</div>
<svg style="left:0px;top:360px" width="16" height="17" viewBox="0 0 16 17"><path d="M1.5 1.5h9.5l3 3v11h-12.5z" fill="#fdfdfd" stroke="#cdcdcd"/><path d="M11 1.5v3h3" fill="none" stroke="#dadada"/><path d="M3 4h6M3 6h7" stroke="#eeeeee"/><text x="3.4" y="14.8" font-family="Liberation Sans" font-weight="bold" font-size="10.6" fill="#000" stroke="#000" stroke-width="0.35" letter-spacing="-0.5">py</text></svg>
<div class="row" style="left:21px;top:360px">Count lines, sentences, and words of a text file</div>
<div class="row" style="left:300px;width:55px;text-align:right;top:360px">1 KB</div>
<svg style="left:0px;top:378px" width="16" height="17" viewBox="0 0 16 17"><path d="M1.5 1.5h9.5l3 3v11h-12.5z" fill="#fdfdfd" stroke="#cdcdcd"/><path d="M11 1.5v3h3" fill="none" stroke="#dadada"/><path d="M3 4h6M3 6h7" stroke="#eeeeee"/><text x="3.4" y="14.8" font-family="Liberation Sans" font-weight="bold" font-size="10.6" fill="#000" stroke="#000" stroke-width="0.35" letter-spacing="-0.5">py</text></svg>
<div class="row" style="left:21px;top:378px">Using google map on mobile phone</div>
<div class="row" style="left:300px;width:55px;text-align:right;top:378px">1 KB</div>
<svg style="left:0px;top:396px" width="16" height="17" viewBox="0 0 16 17"><path d="M1.5 1.5h9.5l3 3v11h-12.5z" fill="#fdfdfd" stroke="#cdcdcd"/><path d="M11 1.5v3h3" fill="none" stroke="#dadada"/><path d="M3 4h6M3 6h7" stroke="#eeeeee"/><text x="3.4" y="14.8" font-family="Liberation Sans" font-weight="bold" font-size="10.6" fill="#000" stroke="#000" stroke-width="0.35" letter-spacing="-0.5">py</text></svg>
<div class="row" style="left:21px;top:396px">Camera preview</div>
<div class="row" style="left:300px;width:55px;text-align:right;top:396px">KB</div>
<svg style="left:0px;top:414px" width="16" height="17" viewBox="0 0 16 17"><path d="M1.5 1.5h9.5l3 3v11h-12.5z" fill="#fdfdfd" stroke="#cdcdcd"/><path d="M11 1.5v3h3" fill="none" stroke="#dadada"/><path d="M3 4h6M3 6h7" stroke="#eeeeee"/><text x="3.4" y="14.8" font-family="Liberation Sans" font-weight="bold" font-size="10.6" fill="#000" stroke="#000" stroke-width="0.35" letter-spacing="-0.5">py</text></svg>
<div class="row" style="left:21px;top:414px">Get mobile cpu speed</div>
<div class="row" style="left:300px;width:55px;text-align:right;top:414px">KB</div>
<svg style="left:0px;top:432px" width="16" height="17" viewBox="0 0 16 17"><path d="M1.5 1.5h9.5l3 3v11h-12.5z" fill="#fdfdfd" stroke="#cdcdcd"/><path d="M11 1.5v3h3" fill="none" stroke="#dadada"/><path d="M3 4h6M3 6h7" stroke="#eeeeee"/><text x="3.4" y="14.8" font-family="Liberation Sans" font-weight="bold" font-size="10.6" fill="#000" stroke="#000" stroke-width="0.35" letter-spacing="-0.5">py</text></svg>
<div class="row" style="left:21px;top:432px">Get LAST_INSERT_ID from Symbian DBMS</div>
<div class="row" style="left:300px;width:55px;text-align:right;top:432px">KB</div>
<svg style="left:0px;top:450px" width="16" height="17" viewBox="0 0 16 17"><path d="M1.5 1.5h9.5l3 3v11h-12.5z" fill="#fdfdfd" stroke="#cdcdcd"/><path d="M11 1.5v3h3" fill="none" stroke="#dadada"/><path d="M3 4h6M3 6h7" stroke="#eeeeee"/><text x="3.4" y="14.8" font-family="Liberation Sans" font-weight="bold" font-size="10.6" fill="#000" stroke="#000" stroke-width="0.35" letter-spacing="-0.5">py</text></svg>
<div class="row" style="left:21px;top:450px">Getting phone model</div>
<div class="row" style="left:300px;width:55px;text-align:right;top:450px">2 KB</div>
<svg style="left:0px;top:468px" width="16" height="17" viewBox="0 0 16 17"><path d="M1.5 1.5h9.5l3 3v11h-12.5z" fill="#fdfdfd" stroke="#cdcdcd"/><path d="M11 1.5v3h3" fill="none" stroke="#dadada"/><path d="M3 4h6M3 6h7" stroke="#eeeeee"/><text x="3.4" y="14.8" font-family="Liberation Sans" font-weight="bold" font-size="10.6" fill="#000" stroke="#000" stroke-width="0.35" letter-spacing="-0.5">py</text></svg>
<div class="row" style="left:21px;top:468px">Convert a directory full of png images to a (wxP…</div>
<div class="row" style="left:300px;width:55px;text-align:right;top:468px">2 KB</div>
<svg style="left:0px;top:486px" width="16" height="17" viewBox="0 0 16 17"><path d="M1.5 1.5h9.5l3 3v11h-12.5z" fill="#fdfdfd" stroke="#cdcdcd"/><path d="M11 1.5v3h3" fill="none" stroke="#dadada"/><path d="M3 4h6M3 6h7" stroke="#eeeeee"/><text x="3.4" y="14.8" font-family="Liberation Sans" font-weight="bold" font-size="10.6" fill="#000" stroke="#000" stroke-width="0.35" letter-spacing="-0.5">py</text></svg>
<div class="row" style="left:21px;top:486px">Read &amp; Write JPEG COM and EXIF metadata</div>
<div class="row" style="left:300px;width:55px;text-align:right;top:486px">1 KB</div>
<svg style="left:0px;top:504px" width="16" height="17" viewBox="0 0 16 17"><path d="M1.5 1.5h9.5l3 3v11h-12.5z" fill="#fdfdfd" stroke="#cdcdcd"/><path d="M11 1.5v3h3" fill="none" stroke="#dadada"/><path d="M3 4h6M3 6h7" stroke="#eeeeee"/><text x="3.4" y="14.8" font-family="Liberation Sans" font-weight="bold" font-size="10.6" fill="#000" stroke="#000" stroke-width="0.35" letter-spacing="-0.5">py</text></svg>
<div class="row" style="left:21px;top:504px">Finding a bluetooth device</div>
<div class="row" style="left:300px;width:55px;text-align:right;top:504px">KB</div>
<svg style="left:0px;top:522px" width="16" height="17" viewBox="0 0 16 17"><path d="M1.5 1.5h9.5l3 3v11h-12.5z" fill="#fdfdfd" stroke="#cdcdcd"/><path d="M11 1.5v3h3" fill="none" stroke="#dadada"/><path d="M3 4h6M3 6h7" stroke="#eeeeee"/><text x="3.4" y="14.8" font-family="Liberation Sans" font-weight="bold" font-size="10.6" fill="#000" stroke="#000" stroke-width="0.35" letter-spacing="-0.5">py</text></svg>
<div class="row" style="left:21px;top:522px">Discover bluetooth devices around you</div>
<div class="row" style="left:300px;width:55px;text-align:right;top:522px">KB</div>
<svg style="left:0px;top:540px" width="16" height="17" viewBox="0 0 16 17"><path d="M1.5 1.5h9.5l3 3v11h-12.5z" fill="#fdfdfd" stroke="#cdcdcd"/><path d="M11 1.5v3h3" fill="none" stroke="#dadada"/><path d="M3 4h6M3 6h7" stroke="#eeeeee"/><text x="3.4" y="14.8" font-family="Liberation Sans" font-weight="bold" font-size="10.6" fill="#000" stroke="#000" stroke-width="0.35" letter-spacing="-0.5">py</text></svg>
<div class="row" style="left:21px;top:540px">Del.icio.us API</div>
<div class="row" style="left:300px;width:55px;text-align:right;top:540px">1 KB</div>
<svg style="left:0px;top:558px" width="16" height="17" viewBox="0 0 16 17"><path d="M1.5 1.5h9.5l3 3v11h-12.5z" fill="#fdfdfd" stroke="#cdcdcd"/><path d="M11 1.5v3h3" fill="none" stroke="#dadada"/><path d="M3 4h6M3 6h7" stroke="#eeeeee"/><text x="3.4" y="14.8" font-family="Liberation Sans" font-weight="bold" font-size="10.6" fill="#000" stroke="#000" stroke-width="0.35" letter-spacing="-0.5">py</text></svg>
<div class="row" style="left:21px;top:558px">Print to a file</div>
<div class="row" style="left:300px;width:55px;text-align:right;top:558px">KB</div>
<svg style="left:0px;top:576px" width="16" height="17" viewBox="0 0 16 17"><path d="M1.5 1.5h9.5l3 3v11h-12.5z" fill="#fdfdfd" stroke="#cdcdcd"/><path d="M11 1.5v3h3" fill="none" stroke="#dadada"/><path d="M3 4h6M3 6h7" stroke="#eeeeee"/><text x="3.4" y="14.8" font-family="Liberation Sans" font-weight="bold" font-size="10.6" fill="#000" stroke="#000" stroke-width="0.35" letter-spacing="-0.5">py</text></svg>
<div class="row" style="left:21px;top:576px">Create an RSS feed from an SQL query</div>
<div class="row" style="left:300px;width:55px;text-align:right;top:576px">KB</div>
<svg style="left:0px;top:594px" width="16" height="17" viewBox="0 0 16 17"><path d="M1.5 1.5h9.5l3 3v11h-12.5z" fill="#fdfdfd" stroke="#cdcdcd"/><path d="M11 1.5v3h3" fill="none" stroke="#dadada"/><path d="M3 4h6M3 6h7" stroke="#eeeeee"/><text x="3.4" y="14.8" font-family="Liberation Sans" font-weight="bold" font-size="10.6" fill="#000" stroke="#000" stroke-width="0.35" letter-spacing="-0.5">py</text></svg>
<div class="row" style="left:21px;top:594px">Something else here</div>
<div class="row" style="left:300px;width:55px;text-align:right;top:594px">KB</div>
</div>
<div class="a" style="left:602px;top:133px;width:16px;height:617px;background:linear-gradient(90deg,#f0eee6,#fdfdfa 30%,#fdfdfa 70%,#efede4)"></div>
<div class="a" style="left:602px;top:133px;width:16px;height:16px;border:1px solid #fff;border-radius:3px;background:linear-gradient(135deg,#dce8fe,#c4d6fc 60%,#b8cdf8);box-shadow:0 1px 0 #b0c4ec"></div>
<svg style="left:606px;top:138px" width="8" height="5" viewBox="0 0 8 5"><path d="M0.5 4.5L4 1l3.5 3.5" fill="none" stroke="#4d6185" stroke-width="1.8"/></svg>
<div class="a" style="left:602px;top:733px;width:16px;height:16px;border:1px solid #fff;border-radius:3px;background:linear-gradient(135deg,#dce8fe,#c4d6fc 60%,#b8cdf8);box-shadow:0 1px 0 #b0c4ec"></div>
<svg style="left:606px;top:739px" width="8" height="5" viewBox="0 0 8 5"><path d="M0.5 0.5L4 4l3.5-3.5" fill="none" stroke="#4d6185" stroke-width="1.8"/></svg>
<div class="a" style="left:602px;top:150px;width:16px;height:447px;border:1px solid #fff;border-radius:3px;background:linear-gradient(90deg,#cad9fc,#c2d4fc 50%,#b4c9f7);box-shadow:0 1px 0 #a8bde8"></div>
<div class="a" style="left:606px;top:369px;width:7px;height:1px;background:#eef3fe"></div><div class="a" style="left:607px;top:370px;width:7px;height:1px;background:#8ca8e0"></div>
<div class="a" style="left:606px;top:371px;width:7px;height:1px;background:#eef3fe"></div><div class="a" style="left:607px;top:372px;width:7px;height:1px;background:#8ca8e0"></div>
<div class="a" style="left:606px;top:373px;width:7px;height:1px;background:#eef3fe"></div><div class="a" style="left:607px;top:374px;width:7px;height:1px;background:#8ca8e0"></div>
<div class="a" style="left:606px;top:375px;width:7px;height:1px;background:#eef3fe"></div><div class="a" style="left:607px;top:376px;width:7px;height:1px;background:#8ca8e0"></div>
<div class="a panel" style="left:628px;top:83px;width:487px;height:668px"></div>
<div class="a phead" style="left:629px;top:84px;width:485px;height:22px"></div>
<div class="a ht" style="left:632px">Get link popularity on delicious</div>
<svg style="left:1097px;top:90px" width="11" height="11" viewBox="0 0 11 11"><path d="M5.5 0.5L10.5 5.5 5.5 10.5 0.5 5.5z" fill="#4a86f0"/><path d="M5.5 2.5h1v1h-1zM4.5 3.5h1v1h-1zM6.5 3.5h1v1h-1zM3.5 4.5h1v1h-1zM5.5 4.5h1v1h-1zM7.5 4.5h1v1h-1zM4.5 5.5h1v1h-1zM6.5 5.5h1v1h-1zM5.5 6.5h1v1h-1zM3.5 6.5h1v1h-1zM7.5 6.5h1v1h-1zM4.5 7.5h1v1h-1zM6.5 7.5h1v1h-1zM5.5 8.5h1v1h-1z" transform="translate(-0.5,-0.5)" fill="#fff"/><path d="M5.5 0.5L0.5 5.5 5.5 10.5" fill="none" stroke="#fff" stroke-width="1.6"/><path d="M5.5 0.5L10.5 5.5 5.5 10.5" fill="none" stroke="#000" stroke-width="1.1"/></svg>
<div class="a" style="left:629px;top:106px;width:485px;height:23px;background:#fcfbed"></div><div class="a" style="left:629px;top:128px;width:485px;height:1px;background:#ece8d0"></div>
<div class="a" style="left:635px;top:109px;width:102px;height:20px;background:#ebe8d8"></div>
<div class="a" style="left:737px;top:109px;width:2px;height:20px;background:#1a1a1a"></div>
<div class="a" style="left:795px;top:111px;width:1px;height:15px;background:#c0bca8"></div>
<div class="a" style="left:865px;top:111px;width:1px;height:15px;background:#c0bca8"></div>
<div class="a" style="left:956px;top:111px;width:1px;height:15px;background:#c0bca8"></div>
<svg style="left:640px;top:110px" width="15" height="16" viewBox="0 0 15 16"><rect x="0.5" y="0.5" width="12" height="15" fill="url(#gDoc)" stroke="#1c2850"/><path d="M2 5h5M2 7.5h4M2 10h3.5M2 12.5h3" stroke="#3a7ad8" stroke-width="1"/><path d="M4.5 13l1-3 7-7.5 2 2-7 7.5z" fill="#f0c040" stroke="#5a4010" stroke-width="0.8"/><path d="M11.5 2.5l1.5-1.5 2 2-1.5 1.5z" fill="#e82020"/></svg>
<div class="a nw" style="left:660px;top:114px">Preview / Code</div>
<svg style="left:741px;top:110px" width="17" height="17" viewBox="0 0 17 17"><path d="M1 11.5l6.5 3.5 8-3.5-7-3.5z" fill="#e8eef6" stroke="#6a7a90" stroke-width="0.9"/><path d="M1 11.5v1.5l6.5 3.5 8-3.5v-1.5" fill="#b8c4d8" stroke="#6a7a90" stroke-width="0.9"/><path d="M2 2.5l8 3.5v6l-8-3.5z" fill="#cfe2fa" stroke="#2a5ab8" stroke-width="0.9"/><path d="M3.5 4.5l5 2.2M3.5 6.5l5 2.2" stroke="#3a78d8" stroke-width="0.9"/><path d="M3 1l4 1.5" stroke="#3a78d8"/><path d="M12.5 0.5l1.5 1.5-1.5 1.5-1.5-1.5z" fill="#f8d070" stroke="#c08010" stroke-width="0.6"/><path d="M13.5 12.5l1.5 1.5-1.5 1.5-1.5-1.5z" fill="#f8d070" stroke="#c08010" stroke-width="0.6"/><path d="M10 7.5l3-1.5 1.5 2-2 2z" fill="#e84020"/></svg>
<div class="a nw" style="left:763px;top:114px">Notes</div>
<svg style="left:802px;top:111px" width="11" height="13" viewBox="0 0 11 13"><path d="M0.5 0.5h6.5l3 3v9h-9.5z" fill="#e4ecfc" stroke="#1838a0"/><path d="M7 0.5v3h3" fill="#fff" stroke="#1838a0"/><path d="M2.5 5.5h5M2.5 7.5h5M2.5 9.5h5" stroke="#2a5ac8" stroke-width="0.9"/></svg>
<div class="a nw" style="left:821px;top:114px">Example</div>
<svg style="left:869px;top:110px" width="17" height="17" viewBox="0 0 17 17"><rect x="4.5" y="4.5" width="11" height="11.5" fill="#d8dde8" stroke="#404a70"/><path d="M6 6.5h8" stroke="#fff"/><path d="M2.5 13V3.5a2.5 2.5 0 0 1 5 0v9a1.5 1.5 0 0 1-3 0V5" fill="none" stroke="#1a2a90" stroke-width="1.5"/></svg>
<div class="a nw" style="left:891px;top:114px">Attachments</div>
<svg style="left:960px;top:110px" width="16" height="16" viewBox="0 0 16 16"><circle cx="8" cy="8" r="7.5" fill="url(#gGlobe)"/><path d="M3 3.5c2 1.5 3 3 2.5 5s1 3 3 4.5M6.5 1c2 2 4 3 5.5 2.5s2.5 2 1 4.5" fill="none" stroke="#2a70d0" stroke-width="1.8" opacity=".8"/></svg>
<div class="a nw" style="left:982px;top:114px">Internet</div>
<div class="a tbar" style="left:631px;top:132px;width:472px;height:24px"></div>
<div class="a" style="left:633px;top:156px;width:470px;height:1px;background:#3b619c"></div>
<div class="a chev" style="left:1103px;top:132px;height:25px;width:11px;"></div>
<div class="a" style="left:1106px;top:147px;width:5px;height:1px;background:#000"></div>
<div class="a" style="left:1107px;top:148px;width:5px;height:1px;background:#fff"></div>
<div class="a" style="left:1106px;top:150px;width:5px;height:1px;background:#000"></div>
<div class="a" style="left:1107px;top:151px;width:3px;height:1px;background:#000"></div>
<div class="a" style="left:1108px;top:152px;width:1px;height:1px;background:#000"></div>
<div class="a" style="left:1111px;top:151px;width:1px;height:1px;background:#fff"></div>
<div class="a" style="left:1110px;top:152px;width:1px;height:1px;background:#fff"></div>
<div class="a" style="left:1109px;top:153px;width:1px;height:1px;background:#fff"></div>
<div class="gd" style="left:634px;top:135px"></div>
<div class="gd" style="left:634px;top:139px"></div>
<div class="gd" style="left:634px;top:143px"></div>
<div class="gd" style="left:634px;top:147px"></div>
<svg style="left:643px;top:136px" width="16" height="15" viewBox="0 0 16 15"><rect x="0.5" y="0.5" width="14.5" height="13.5" fill="#f2f4f8" stroke="#1a3a98"/><rect x="1" y="1" width="13.5" height="2.5" fill="#2a5ac8"/><rect x="9" y="1.5" width="1" height="1" fill="#fff"/><rect x="11" y="1.5" width="1" height="1" fill="#fff"/><rect x="13" y="1.5" width="1" height="1" fill="#f04020"/><rect x="2.5" y="8.5" width="5" height="4" fill="#fff" stroke="#1a3a98"/><path d="M6 9.5l6-5M8.5 4.5h3.5v3.5" fill="none" stroke="#1a3a98" stroke-width="1.4"/></svg>
<div class="a" style="left:664px;top:142px;width:5px;height:1px;background:#000"></div><div class="a" style="left:665px;top:143px;width:3px;height:1px;background:#000"></div><div class="a" style="left:666px;top:144px;width:1px;height:1px;background:#000"></div>
<div class="a sep" style="left:674px;top:135px;height:16px"></div>
<svg style="left:680px;top:135px" width="18" height="16" viewBox="0 0 18 16"><path d="M1.5 3.5h4l1 1.5h5v9.5h-10z" fill="url(#gFoldB)" stroke="#a08020"/><path d="M3.5 7.5h12.5l-3 7h-12z" fill="url(#gFold)" stroke="#a07010"/><path d="M9.5 3.5c1-3 4.5-3.5 6-0.5" fill="none" stroke="#1838a8" stroke-width="1.6"/><path d="M13.5 3.5h3.5v-3.5z" fill="#1838a8"/></svg>
<svg style="left:704px;top:136px" width="15" height="16" viewBox="0 0 15 16"><path d="M0.5 0.5h14v15h-14z" fill="url(#gFlop)" stroke="#1a1a5a"/><rect x="2.5" y="1" width="10" height="6" fill="#eaeaf8"/><rect x="13" y="1.5" width="1" height="1" fill="#222"/><rect x="3" y="10" width="9" height="5.5" fill="#1e1e38"/><rect x="4.5" y="11.5" width="2.5" height="2.5" fill="#fff"/></svg>
<div class="a" style="left:725px;top:142px;width:5px;height:1px;background:#000"></div><div class="a" style="left:726px;top:143px;width:3px;height:1px;background:#000"></div><div class="a" style="left:727px;top:144px;width:1px;height:1px;background:#000"></div>
<div class="a sep" style="left:735px;top:135px;height:16px"></div>
<svg style="left:742px;top:137px" width="15" height="14" viewBox="0 0 15 14"><g><path d="M3.5 5.5c3-3.5 9-2.5 9 2.5 0 2.5-2 4.5-5 5" fill="none" stroke="#1838a8" stroke-width="3.2" stroke-linecap="round"/><path d="M3.5 5.5c3-3.5 9-2.5 9 2.5 0 2.5-2 4.5-5 5" fill="none" stroke="#4a88e8" stroke-width="1.4" stroke-linecap="round"/><path d="M0.5 1.5v7.5h7z" fill="#2a5ad0" stroke="#1838a8" stroke-width="0.8"/></g></svg>
<svg style="left:765px;top:137px" width="15" height="14" viewBox="0 0 15 14"><g transform="translate(15,0) scale(-1,1)"><path d="M3.5 5.5c3-3.5 9-2.5 9 2.5 0 2.5-2 4.5-5 5" fill="none" stroke="#1838a8" stroke-width="3.2" stroke-linecap="round"/><path d="M3.5 5.5c3-3.5 9-2.5 9 2.5 0 2.5-2 4.5-5 5" fill="none" stroke="#4a88e8" stroke-width="1.4" stroke-linecap="round"/><path d="M0.5 1.5v7.5h7z" fill="#2a5ad0" stroke="#1838a8" stroke-width="0.8"/></g></svg>
<div class="a sep" style="left:786px;top:135px;height:16px"></div>
<svg style="left:795px;top:136px" width="13" height="16" viewBox="0 0 13 16"><path d="M4 0.5l4 9.5M8.5 0.5L5 10" stroke="#606878" stroke-width="1.6"/><path d="M4 0.5l4 9.5M8.5 0.5L5 10" stroke="#e8ecf4" stroke-width="0.6"/><circle cx="3.2" cy="12.8" r="2.4" fill="none" stroke="#1838a8" stroke-width="1.7"/><circle cx="9.6" cy="12.3" r="2.4" fill="none" stroke="#1838a8" stroke-width="1.7"/></svg>
<svg style="left:816px;top:136px" width="16" height="16" viewBox="0 0 16 16"><path d="M0.5 0.5h6l2.5 2.5v7.5h-8.5z" fill="#f6f8fc" stroke="#2a3a6a"/><path d="M2 4h5M2 6h5M2 8h5" stroke="#3a88d8" stroke-width="0.9"/><path d="M6.5 5.5h6l2.5 2.5v7.5h-8.5z" fill="#f6f8fc" stroke="#2a3a6a"/><path d="M8 9h5M8 11h5M8 13h5" stroke="#3a88d8" stroke-width="0.9"/></svg>
<svg style="left:838px;top:135px" width="17" height="17" viewBox="0 0 17 17"><rect x="0.5" y="1.5" width="12" height="13" rx="1" fill="url(#gClip)" stroke="#8a6010"/><path d="M4 3.5v-2h1.5l1-1h1l1 1h1.5v2z" fill="#f6d870" stroke="#8a6010" stroke-width="0.9"/><path d="M6.5 5.5h6.5l3 3v7.5h-9.5z" fill="#f4f8ff" stroke="#2a3a6a"/><path d="M8.5 9h5M8.5 11h5M8.5 13h5" stroke="#3a88d8" stroke-width="1"/></svg>
<div class="a sep" style="left:860px;top:135px;height:16px"></div>
<div class="a nw" style="left:867px;top:137px;font-size:11px"><span class="u">A</span>dvanced</div>
<div class="a" style="left:920px;top:142px;width:5px;height:1px;background:#000"></div><div class="a" style="left:921px;top:143px;width:3px;height:1px;background:#000"></div><div class="a" style="left:922px;top:144px;width:1px;height:1px;background:#000"></div>
<div class="a sep" style="left:1075px;top:135px;height:16px"></div>
<svg style="left:1081px;top:135px" width="15" height="16" viewBox="0 0 15 16"><path d="M3.5 7.5V5a4 4 0 0 1 8 0v2.5" fill="none" stroke="#8a5a00" stroke-width="2.4"/><path d="M3.5 7.5V5a4 4 0 0 1 8 0v2.5" fill="none" stroke="#f8d060" stroke-width="0.9"/><rect x="0.5" y="7.5" width="14" height="8" rx="1" fill="url(#gLock)" stroke="#8a5a00"/><circle cx="7.5" cy="10.5" r="1.2" fill="#302000"/><path d="M7.5 11v2.5" stroke="#302000" stroke-width="1.2"/></svg>
<div class="a" style="left:629px;top:157px;width:468px;height:577px;background:#fff"></div>
<div class="a" style="left:629px;top:157px;width:31px;height:577px;background:linear-gradient(90deg,#e8e5d4,#f4f2e8)"></div>
<div class="a" style="left:660px;top:157px;width:1px;height:577px;background:#6a6a6a"></div>
<div class="a" style="left:629px;top:158px;width:468px;height:576px;overflow:hidden">
<div class="a code ln" style="left:0;top:0px">1</div>
<div class="a code" style="left:32px;top:0px"><span class="cm">#We are using python&#x27;s delicious-py module</span></div>
<div class="a code ln" style="left:0;top:16px">2</div>
<div class="a code" style="left:32px;top:16px"></div>
<div class="a code ln" style="left:0;top:32px">3</div>
<div class="a code" style="left:32px;top:32px"></div>
<div class="a code ln" style="left:0;top:48px">4</div>
<div class="a code" style="left:32px;top:48px"><span class="kw">def</span> get_popular_count(user=<span class="st">&quot;user&quot;</span>):</div>
<div class="a code ln" style="left:0;top:64px">5</div>
<div class="a code" style="left:32px;top:64px">    <span class="kw">import</span> delicious</div>
<div class="a code ln" style="left:0;top:80px">6</div>
<div class="a code" style="left:32px;top:80px">    notapi = delicious.DeliciousNOTAPI()</div>
<div class="a code ln" style="left:0;top:96px">7</div>
<div class="a code" style="left:32px;top:96px"></div>
<div class="a code ln" style="left:0;top:112px">8</div>
<div class="a code" style="left:32px;top:112px">    <span class="cm">#Get user&#x27;s posts</span></div>
<div class="a code ln" style="left:0;top:128px">9</div>
<div class="a code" style="left:32px;top:128px">    user_posts = notapi.get_posts_by_user(user)</div>
<div class="a code ln" style="left:0;top:144px">10</div>
<div class="a code" style="left:32px;top:144px"></div>
<div class="a code ln" style="left:0;top:160px">11</div>
<div class="a code" style="left:32px;top:160px">    data = <span class="st">&#x27;#tagID popularity\n&#x27;</span></div>
<div class="a code ln" style="left:0;top:176px">12</div>
<div class="a code" style="left:32px;top:176px"></div>
<div class="a code ln" style="left:0;top:192px">13</div>
<div class="a code" style="left:32px;top:192px">    <span class="cm">#For each url, get how popular it is</span></div>
<div class="a code ln" style="left:0;top:208px">14</div>
<div class="a code" style="left:32px;top:208px">    <span class="kw">for</span> i <span class="kw">in</span> range(len(user_posts)):</div>
<div class="a code ln" style="left:0;top:224px">15</div>
<div class="a code" style="left:32px;top:224px">        data += str(i)+<span class="st">&quot; &quot;</span>+str(len(notapi.get_posts_by_url(user_posts[i]</div>
<div class="a code ln" style="left:0;top:240px">16</div>
<div class="a code" style="left:32px;top:240px"></div>
<div class="a code ln" style="left:0;top:256px">17</div>
<div class="a code" style="left:32px;top:256px">    strl = user + <span class="st">&quot;-data&quot;</span> <span class="cm">#file name</span></div>
<div class="a code ln" style="left:0;top:272px">18</div>
<div class="a code" style="left:32px;top:272px">    data_file = file(strl,<span class="st">&#x27;w&#x27;</span>)</div>
<div class="a code ln" style="left:0;top:288px">19</div>
<div class="a code" style="left:32px;top:288px">    data_file.write(data)</div>
<div class="a code ln" style="left:0;top:304px">20</div>
<div class="a code" style="left:32px;top:304px">    data_file.close()</div>
<div class="a code ln" style="left:0;top:320px">21</div>
<div class="a code" style="left:32px;top:320px"></div>
<div class="a code ln" style="left:0;top:336px">22</div>
<div class="a code" style="left:32px;top:336px"></div>
<div class="a code ln" style="left:0;top:352px">23</div>
<div class="a code" style="left:32px;top:352px"></div>
<div class="a code ln" style="left:0;top:368px">24</div>
<div class="a code" style="left:32px;top:368px">The resulting file will look like this:</div>
<div class="a code ln" style="left:0;top:384px">25</div>
<div class="a code" style="left:32px;top:384px"></div>
<div class="a code ln" style="left:0;top:400px">26</div>
<div class="a code" style="left:32px;top:400px">$ less jemisa-data</div>
<div class="a code ln" style="left:0;top:416px">27</div>
<div class="a code" style="left:32px;top:416px"><span class="cm">#tagID popularity</span></div>
<div class="a code ln" style="left:0;top:432px">28</div>
<div class="a code" style="left:32px;top:432px">0 6</div>
<div class="a code ln" style="left:0;top:448px">29</div>
<div class="a code" style="left:32px;top:448px">1 744</div>
<div class="a code ln" style="left:0;top:464px">30</div>
<div class="a code" style="left:32px;top:464px">2 928</div>
<div class="a code ln" style="left:0;top:480px">31</div>
<div class="a code" style="left:32px;top:480px">3 120</div>
<div class="a code ln" style="left:0;top:496px">32</div>
<div class="a code" style="left:32px;top:496px">4 1934</div>
<div class="a code ln" style="left:0;top:512px">33</div>
<div class="a code" style="left:32px;top:512px">5 111</div>
<div class="a code ln" style="left:0;top:528px">34</div>
<div class="a code" style="left:32px;top:528px">6 425</div>
<div class="a code ln" style="left:0;top:544px">35</div>
<div class="a code" style="left:32px;top:544px">7 16</div>
<div class="a code ln" style="left:0;top:560px">36</div>
<div class="a code" style="left:32px;top:560px">8 19</div>
</div>
<div class="a" style="left:1097px;top:158px;width:16px;height:576px;background:linear-gradient(90deg,#f0eee6,#fdfdfa 30%,#fdfdfa 70%,#efede4)"></div>
<div class="a" style="left:1097px;top:158px;width:16px;height:16px;border:1px solid #fff;border-radius:3px;background:linear-gradient(135deg,#dce8fe,#c4d6fc 60%,#b8cdf8);box-shadow:0 1px 0 #b0c4ec"></div>
<svg style="left:1101px;top:163px" width="8" height="5" viewBox="0 0 8 5"><path d="M0.5 4.5L4 1l3.5 3.5" fill="none" stroke="#4d6185" stroke-width="1.8"/></svg>
<div class="a" style="left:1097px;top:717px;width:16px;height:16px;border:1px solid #fff;border-radius:3px;background:linear-gradient(135deg,#dce8fe,#c4d6fc 60%,#b8cdf8);box-shadow:0 1px 0 #b0c4ec"></div>
<svg style="left:1101px;top:723px" width="8" height="5" viewBox="0 0 8 5"><path d="M0.5 0.5L4 4l3.5-3.5" fill="none" stroke="#4d6185" stroke-width="1.8"/></svg>
<div class="a" style="left:1097px;top:175px;width:16px;height:353px;border:1px solid #fff;border-radius:3px;background:linear-gradient(90deg,#cad9fc,#c2d4fc 50%,#b4c9f7);box-shadow:0 1px 0 #a8bde8"></div>
<div class="a" style="left:1101px;top:347px;width:7px;height:1px;background:#eef3fe"></div><div class="a" style="left:1102px;top:348px;width:7px;height:1px;background:#8ca8e0"></div>
<div class="a" style="left:1101px;top:349px;width:7px;height:1px;background:#eef3fe"></div><div class="a" style="left:1102px;top:350px;width:7px;height:1px;background:#8ca8e0"></div>
<div class="a" style="left:1101px;top:351px;width:7px;height:1px;background:#eef3fe"></div><div class="a" style="left:1102px;top:352px;width:7px;height:1px;background:#8ca8e0"></div>
<div class="a" style="left:1101px;top:353px;width:7px;height:1px;background:#eef3fe"></div><div class="a" style="left:1102px;top:354px;width:7px;height:1px;background:#8ca8e0"></div>
<div class="a" style="left:629px;top:734px;width:468px;height:16px;background:linear-gradient(180deg,#f0eee6,#fdfdfa 30%,#fdfdfa 70%,#efede4)"></div>
<div class="a" style="left:629px;top:734px;width:16px;height:16px;border:1px solid #fff;border-radius:3px;background:linear-gradient(135deg,#dce8fe,#c4d6fc 60%,#b8cdf8)"></div>
<svg style="left:634px;top:738px" width="5" height="8" viewBox="0 0 5 8"><path d="M4.5 0.5L1 4l3.5 3.5" fill="none" stroke="#4d6185" stroke-width="1.7"/></svg>
<div class="a" style="left:1081px;top:734px;width:16px;height:16px;border:1px solid #fff;border-radius:3px;background:linear-gradient(135deg,#dce8fe,#c4d6fc 60%,#b8cdf8)"></div>
<svg style="left:1086px;top:738px" width="5" height="8" viewBox="0 0 5 8"><path d="M0.5 0.5L4 4l-3.5 3.5" fill="none" stroke="#4d6185" stroke-width="1.7"/></svg>
<div class="a" style="left:645px;top:734px;width:307px;height:16px;border:1px solid #fff;border-radius:3px;background:linear-gradient(180deg,#cad9fc,#c2d4fc 50%,#b4c9f7)"></div>
<div class="a" style="left:795px;top:738px;width:1px;height:7px;background:#eef3fe"></div><div class="a" style="left:796px;top:739px;width:1px;height:7px;background:#8ca8e0"></div>
<div class="a" style="left:797px;top:738px;width:1px;height:7px;background:#eef3fe"></div><div class="a" style="left:798px;top:739px;width:1px;height:7px;background:#8ca8e0"></div>
<div class="a" style="left:799px;top:738px;width:1px;height:7px;background:#eef3fe"></div><div class="a" style="left:800px;top:739px;width:1px;height:7px;background:#8ca8e0"></div>
<div class="a" style="left:801px;top:738px;width:1px;height:7px;background:#eef3fe"></div><div class="a" style="left:802px;top:739px;width:1px;height:7px;background:#8ca8e0"></div>
<div class="a" style="left:1097px;top:734px;width:17px;height:16px;background:#ece9d8"></div>
<div class="a" id="status"></div>
<div class="a sp" style="left:5px;width:648px;color:#000">Change Language</div>
<div class="a sp" style="left:656px;width:62px;color:#000">Python</div>
<div class="a sp" style="left:720px;width:102px;color:#000">43 Items</div>
<div class="a sp" style="left:824px;width:152px;color:#000"></div>
<div class="a sp" style="left:978px;width:32px;color:#aca899;padding:0;text-align:center;font-size:10.3px;letter-spacing:-0.4px">CAPS</div>
<div class="a sp" style="left:1012px;width:28px;color:#000;padding:0;text-align:center;font-size:10.3px;letter-spacing:-0.4px">NUM</div>
<div class="a sp" style="left:1042px;width:31px;color:#aca899;padding:0;text-align:center;font-size:10.3px;letter-spacing:-0.4px">SCRL</div>
<div class="a sp" style="left:1075px;width:27px;color:#aca899;padding:0;text-align:center;font-size:10.3px;letter-spacing:-0.4px">INS</div>
<div class="a" style="left:1114px;top:762px;width:2px;height:2px;background:#0a1a50;box-shadow:1px 1px 0 #fff"></div>
<div class="a" style="left:1110px;top:766px;width:2px;height:2px;background:#0a1a50;box-shadow:1px 1px 0 #fff"></div>
<div class="a" style="left:1114px;top:766px;width:2px;height:2px;background:#0a1a50;box-shadow:1px 1px 0 #fff"></div>
<div class="a" style="left:1106px;top:770px;width:2px;height:2px;background:#0a1a50;box-shadow:1px 1px 0 #fff"></div>
<div class="a" style="left:1110px;top:770px;width:2px;height:2px;background:#0a1a50;box-shadow:1px 1px 0 #fff"></div>
<div class="a" style="left:1114px;top:770px;width:2px;height:2px;background:#0a1a50;box-shadow:1px 1px 0 #fff"></div>
</div></body></html>
